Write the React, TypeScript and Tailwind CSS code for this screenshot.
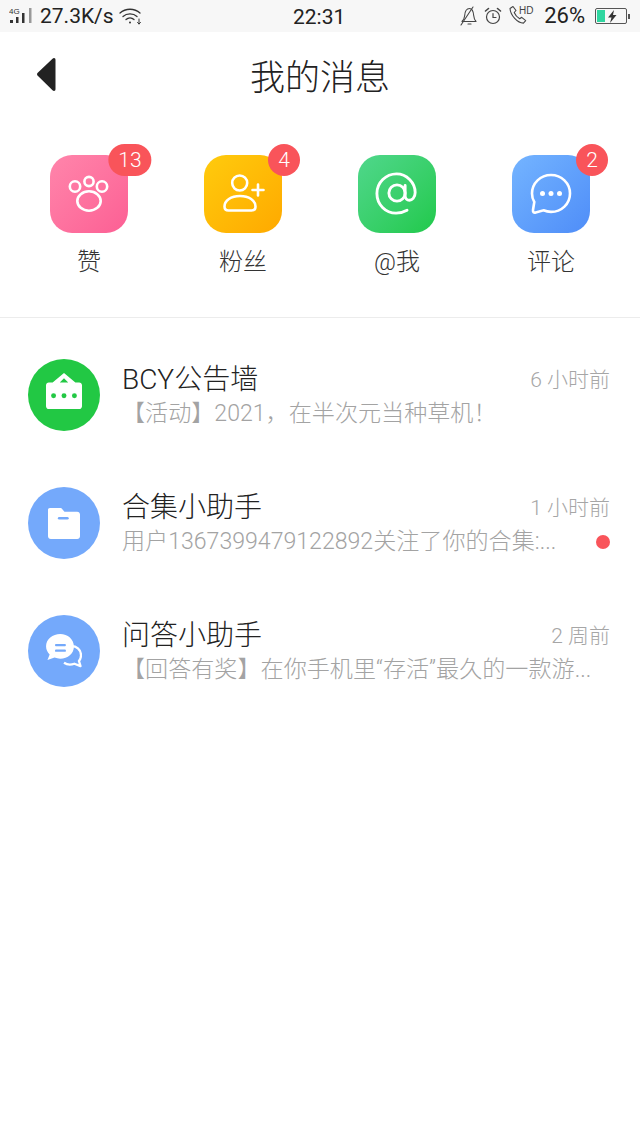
const FONT = "font-['Roboto','Noto_Sans_CJK_SC',sans-serif]";

function SignalIcon() {
  return (
    <svg width="26" height="18" viewBox="0 0 26 18" fill="#333">
      <text x="0" y="7" fontSize="8" fontFamily="Liberation Sans, sans-serif">4G</text>
      <rect x="1" y="13" width="3" height="3" />
      <rect x="7" y="10" width="2.5" height="6" />
      <rect x="13" y="6" width="2.5" height="10" />
      <rect x="20" y="1" width="2.5" height="15" fill="#999" />
    </svg>
  );
}

function WifiIcon() {
  return (
    <svg width="24" height="18" viewBox="0 0 24 18" fill="none" stroke="#333" strokeWidth="1.3" strokeLinecap="round">
      <path d="M1 6c5.500-5 14.500-5 20 0" />
      <path d="M4 9.500c3.800-3.400 10.200-3.400 14 0" />
      <path d="M7 12.500c2.300-2 5.700-2 8 0" />
      <circle cx="11" cy="15.500" r="1" fill="#333" stroke="none" />
      <path d="M20 12v5M18.500 15.500l1.500 1.500 1.500-1.500" strokeWidth="1" />
    </svg>
  );
}

function MutedBellIcon() {
  return (
    <svg width="18" height="20" viewBox="0 0 18 20" fill="none" stroke="#444" strokeWidth="1.1" strokeLinejoin="round" strokeLinecap="round">
      <path d="M2 15.500h14c-1.500-1.500-2-3-2.300-6C13.300 5 12 2.500 9.500 2.500 6.500 2.500 5 5 4.700 9.500 4.500 12 3.500 14 2 15.500z" />
      <path d="M8 18h3" />
      <path d="M1 19 13 1" />
    </svg>
  );
}

function AlarmIcon() {
  return (
    <svg width="18" height="18" viewBox="0 0 18 18" fill="none" stroke="#444" strokeWidth="1.2" strokeLinecap="round">
      <circle cx="9" cy="10" r="6.500" />
      <path d="M9 6.500V10.500H12" />
      <path d="M1.500 4 4.500 1.500M16.500 4 13.500 1.500" strokeWidth="1.600" />
    </svg>
  );
}

function HdCallIcon() {
  return (
    <svg width="27" height="22" viewBox="0 0 27 22" fill="none" stroke="#444" strokeWidth="1.1" strokeLinejoin="round">
      <path d="M2 3.500 5 1.500l3 4-1.800 2c1 2.500 3 4.800 5.500 6.300l2-1.500 4 3.300-2.300 2.500C9.500 18 2.500 10.500 2 3.500z" />
      <text x="11" y="9" fontSize="10" fill="#444" stroke="none" fontFamily="Liberation Sans, sans-serif">HD</text>
    </svg>
  );
}

function BatteryIcon() {
  return (
    <div className="flex items-center">
      <div className="relative flex h-[16px] w-[32px] items-stretch rounded-[2px] border border-[#555] p-px">
        <div className="w-[8px] bg-[#2fd6a0]" />
        <svg className="absolute left-[10px] top-px" width="14" height="13" viewBox="0 0 14 13" fill="#333">
          <path d="M8 0 2 7.500h3.500L4 13l6.500-8H7z" />
        </svg>
      </div>
      <div className="ml-px h-[5px] w-[2px] bg-[#555]" />
    </div>
  );
}

function StatusBar() {
  return (
    <div className="relative flex h-[32px] items-center justify-between bg-[#f7f7f7] pl-[9px] pr-[10px] text-[#222]">
      <div className="flex items-center gap-[5px]">
        <SignalIcon />
        <span className="text-[21px] leading-none">27.3K/s</span>
        <WifiIcon />
      </div>
      <span className="absolute left-[293px] top-[7px] text-[21px] leading-none">22:31</span>
      <div className="flex items-center gap-[6px]">
        <MutedBellIcon />
        <AlarmIcon />
        <HdCallIcon />
        <span className="ml-[3px] mr-[4px] text-[22px] leading-none">26%</span>
        <BatteryIcon />
      </div>
    </div>
  );
}

function PawIcon() {
  return (
    <svg width="44" height="44" viewBox="0 0 44 44" fill="none" stroke="#fff" strokeWidth="2.600">
      <circle cx="8" cy="14.500" r="5.200" />
      <circle cx="22" cy="9.500" r="4.600" />
      <circle cx="35" cy="14.500" r="5.200" />
      <ellipse cx="22" cy="29" rx="11.700" ry="9.700" />
    </svg>
  );
}

function FanIcon() {
  return (
    <svg width="44" height="40" viewBox="0 0 44 40" fill="none" stroke="#fff" strokeWidth="2.600" strokeLinecap="round">
      <circle cx="18.700" cy="9" r="7.500" />
      <path d="M19 22c-9 0-15.500 4.500-15.500 10.500 0 2.500 1.500 4 4 4h23c2.500 0 4-1.500 4-4C34.500 26.500 28 22 19 22z" />
      <path d="M31.500 16h11M37 10.500v11" />
    </svg>
  );
}

function AtIcon() {
  return (
    <svg width="44" height="44" viewBox="0 0 46 46" fill="none" stroke="#fff" strokeWidth="3" strokeLinecap="round">
      <circle cx="23" cy="22" r="8.500" />
      <path d="M31.500 14v10.500c0 3 2 5 4.500 5s6-2.500 6-8C42 11 33 2 22.500 2 11.500 2 2 11 2 22.500S11 43 22 43c4.500 0 8-1 11.500-3" />
    </svg>
  );
}

function CommentIcon() {
  return (
    <svg width="42" height="42" viewBox="0 0 42 42" fill="none">
      <path
        d="M21 2C10.500 2 2 10 2 20.500c0 3.500.7 6 2.300 8.500L3 37c-.3 2 .8 3 2.700 2.500l7.800-2.200c2.300 1 4.700 1.600 7.500 1.600 10.500 0 19-8 19-18.400S31.500 2 21 2z"
        stroke="#fff"
        strokeWidth="2.600"
      />
      <circle cx="12.500" cy="20.500" r="2.500" fill="#fff" />
      <circle cx="21" cy="20.500" r="2.500" fill="#fff" />
      <circle cx="29.500" cy="20.500" r="2.500" fill="#fff" />
    </svg>
  );
}

function ShopIcon() {
  return (
    <svg className="mb-[8px]" width="36" height="36" viewBox="0 0 38 38" fill="#fff">
      <path d="M19 0 7 10H3c-1.700 0-3 1.300-3 3v22c0 1.700 1.300 3 3 3h32c1.700 0 3-1.300 3-3V13c0-1.700-1.300-3-3-3h-4zM19 5.500l4.500 4.500h-9z" fillRule="evenodd" />
      <circle cx="8" cy="24" r="2.600" fill="#22c844" />
      <circle cx="19" cy="24" r="2.600" fill="#22c844" />
      <circle cx="30" cy="24" r="2.600" fill="#22c844" />
    </svg>
  );
}

function FolderIcon() {
  return (
    <svg width="32" height="32" viewBox="0 0 34 34" fill="#fff">
      <path d="M2 1h11c1 0 1.500.5 2 1l2.500 3H31c1.700 0 3 1.300 3 3v23c0 1.700-1.300 3-3 3H3c-1.700 0-3-1.300-3-3V3c0-1.200.8-2 2-2z" />
      <rect x="10.500" y="10.500" width="11.500" height="2.800" rx="1.400" fill="#74a9fb" />
    </svg>
  );
}

function ChatIcon() {
  return (
    <svg width="36" height="34" viewBox="0 0 38 36" fill="none">
      <path d="M26 13c6-.5 11 3.500 11 9.500 0 2.500-.8 4.500-2.200 6l1.700 5.500-6.500-2.500c-4 1.500-8 1-11-1" stroke="#fff" strokeWidth="2.400" strokeLinejoin="round" />
      <path d="M15 0C7 0 0 5.500 0 13c0 3.500 1.500 6.500 3.800 8.800L1.500 27.500l7.500-2.500c2 .8 4 1.200 6 1.200 8 0 14.500-5.500 14.500-13S23 0 15 0z" fill="#fff" />
      <rect x="9.500" y="10.500" width="11.500" height="2.400" rx="1" fill="#74a9fb" />
      <rect x="9.500" y="16.500" width="11.500" height="2.400" rx="1" fill="#74a9fb" />
    </svg>
  );
}

function Shortcut({ label, badge, bg, children }: { label: string; badge?: string; bg: string; children: React.ReactNode }) {
  return (
    <div className="flex flex-col items-center">
      <div className={`relative flex h-[78px] w-[78px] items-center justify-center rounded-[22px] ${bg}`}>
        {children}
        {badge && (
          <span className="absolute left-[80px] top-[-11px] flex h-[32px] min-w-[32px] -translate-x-1/2 items-center justify-center rounded-full bg-[#f9545a] px-[10px] text-[21px] font-light leading-none text-white">
            {badge}
          </span>
        )}
      </div>
      <span className="mt-[13px] text-[24px] font-light leading-[32px] text-[#333]">{label}</span>
    </div>
  );
}

function MessageRow({ title, sub, time, bg, dot, children }: { title: string; sub: string; time: string; bg: string; dot?: boolean; children: React.ReactNode }) {
  return (
    <div className="flex h-[128px] items-center pl-[28px] pr-[30px]">
      <div className={`flex h-[72px] w-[72px] shrink-0 items-center justify-center rounded-full ${bg}`}>{children}</div>
      <div className="ml-[22px] min-w-0 flex-1">
        <div className="flex items-center justify-between">
          <span className="text-[28px] font-light leading-[38px] text-[#222]">{title}</span>
          <span className="text-[21px] font-light leading-[38px] text-[#a6a6a6]">{time}</span>
        </div>
        <div className="flex items-center justify-between">
          <span className="whitespace-nowrap text-[23.1px] font-light leading-[30px] text-[#a3a3a3]">{sub}</span>
          {dot && <span className="h-[14px] w-[14px] rounded-full bg-[#f9545a]" />}
        </div>
      </div>
    </div>
  );
}

export default function App() {
  return (
    <div className={`min-h-[1138px] bg-white ${FONT}`}>
      <StatusBar />
      <div className="relative flex h-[88px] items-center justify-center pt-[4px]">
        <svg className="absolute left-[37px] top-[26px]" width="19" height="33" viewBox="0 0 19 33" fill="#222">
          <path d="M17 0c1 0 1.500.7 1.500 2v29c0 1.300-.5 2-1.500 2-.5 0-1-.2-1.500-.7L1 18c-1.300-1-1.300-2.500 0-3.500L15.500.7C16 .2 16.500 0 17 0z" />
        </svg>
        <h1 className="text-[35px] font-light leading-none text-[#222]">我的消息</h1>
      </div>
      <div className="grid h-[198px] grid-cols-4 border-b border-[#ececec] px-[12px] pt-[35px]">
        <Shortcut label="赞" badge="13" bg="bg-gradient-to-br from-[#ff85ab] to-[#fc5f94]">
          <PawIcon />
        </Shortcut>
        <Shortcut label="粉丝" badge="4" bg="bg-gradient-to-br from-[#ffcb0d] to-[#ffa900]">
          <FanIcon />
        </Shortcut>
        <Shortcut label="@我" bg="bg-gradient-to-br from-[#4fd78b] to-[#1fc94a]">
          <AtIcon />
        </Shortcut>
        <Shortcut label="评论" badge="2" bg="bg-gradient-to-br from-[#74b4ff] to-[#4f8df8]">
          <CommentIcon />
        </Shortcut>
      </div>
      <div className="pt-[13px]">
        <MessageRow title="BCY公告墙" sub="【活动】2021，在半次元当种草机！" time="6 小时前" bg="bg-[#22c844]">
          <ShopIcon />
        </MessageRow>
        <MessageRow title="合集小助手" sub="用户1367399479122892关注了你的合集:..." time="1 小时前" bg="bg-[#74a9fb]" dot>
          <FolderIcon />
        </MessageRow>
        <MessageRow title="问答小助手" sub="【回答有奖】在你手机里“存活”最久的一款游..." time="2 周前" bg="bg-[#74a9fb]">
          <ChatIcon />
        </MessageRow>
      </div>
    </div>
  );
}
